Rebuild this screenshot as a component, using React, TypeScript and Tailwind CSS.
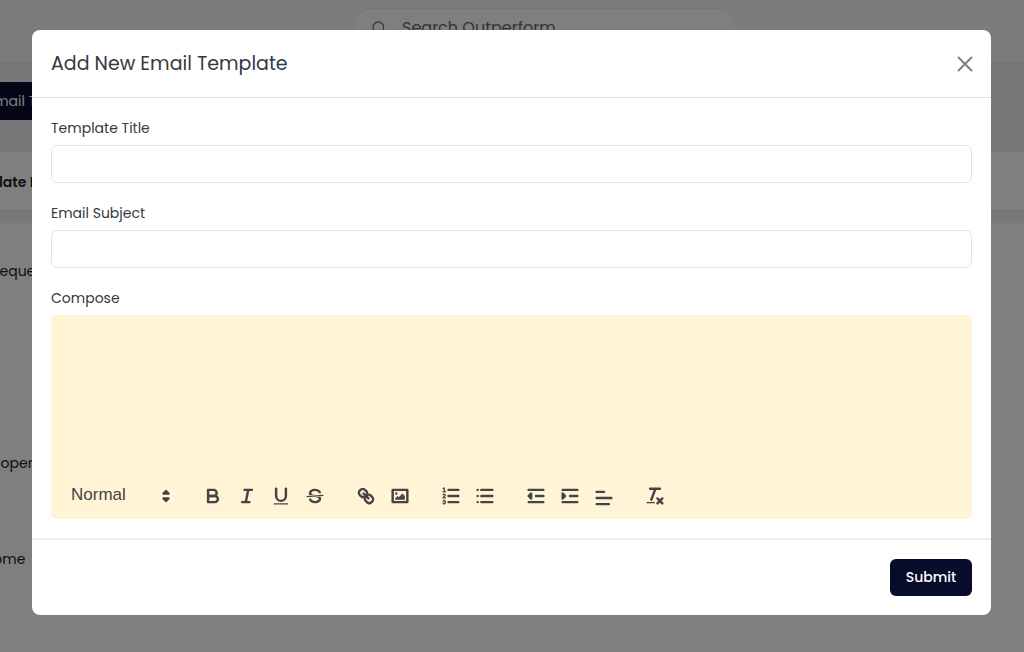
import { ReactNode } from "react"
import { Search } from "lucide-react"

const Icon = ({ children } : {children: ReactNode}) => {
    return (
        <svg viewBox="0 0 18 18" className="size-[22px]" fill="none" stroke="#444" strokeWidth="2" strokeLinecap="round" strokeLinejoin="round" aria-hidden="true">
            {children}
        </svg>
    )
}

const fill = { fill: "#444", stroke: "none" }

const toolGroups: { label: string, low?: boolean, icon: ReactNode }[][] = [
    [
        {
            label: "Bold",
            icon: <>
                <path d="M5,4H9.5A2.5,2.5,0,0,1,12,6.5v0A2.5,2.5,0,0,1,9.5,9H5V4Z" />
                <path d="M5,9h5.5A2.5,2.5,0,0,1,13,11.5v0A2.5,2.5,0,0,1,10.5,14H5V9Z" />
            </>
        },
        {
            label: "Italic",
            icon: <path d="M7,4H13M5,14H11M8,14L10,4" />
        },
        {
            label: "Underline",
            icon: <>
                <path d="M5,3V9a4.012,4.012,0,0,0,4,4H9a4.012,4.012,0,0,0,4-4V3" />
                <rect {...fill} x="3" y="15" width="12" height="1" rx="0.5" />
            </>
        },
        {
            label: "Strikethrough",
            icon: <>
                <path strokeWidth="1" d="M15.5,8.5L2.5,9.5" />
                <path {...fill} d="M9.007,8C6.542,7.791,6,7.519,6,6.5,6,5.792,7.283,5,9,5c1.571,0,2.765.679,2.969,1.309a1,1,0,0,0,1.9-.617C13.356,4.106,11.354,3,9,3,6.2,3,4,4.538,4,6.5a3.2,3.2,0,0,0,.5,1.843Z" />
                <path {...fill} d="M8.984,10C11.457,10.208,12,10.479,12,11.5c0,.708-1.283,1.5-3,1.5-1.571,0-2.765-.679-2.969-1.309a1,1,0,1,0-1.9.617C4.644,13.894,6.646,15,9,15c2.8,0,5-1.538,5-3.5a3.2,3.2,0,0,0-.5-1.843Z" />
            </>
        },
    ],
    [
        {
            label: "Link",
            icon: <>
                <path d="M7,7L11,11" />
                <path d="M8.9,4.577a3.476,3.476,0,0,1,.36,4.679A3.476,3.476,0,0,1,4.577,8.9C3.185,7.5,2.035,6.4,4.217,4.217S7.5,3.185,8.9,4.577Z" />
                <path d="M13.423,9.1a3.476,3.476,0,0,0-4.679-.36,3.476,3.476,0,0,0,.36,4.679c1.392,1.392,2.5,2.542,4.679.36S14.815,10.5,13.423,9.1Z" />
            </>
        },
        {
            label: "Image",
            icon: <>
                <rect x="3" y="4" width="12" height="10" />
                <circle {...fill} cx="6" cy="7" r="1" />
                <path {...fill} d="M5,12V11L7,9L8,10L11,7L13,9V12Z" />
            </>
        },
    ],
    [
        {
            label: "Numbered list",
            icon: <>
                <path d="M7,4H15M7,9H15M7,14H15" />
                <path strokeWidth="1" d="M2.5,5.5H4.5" />
                <path {...fill} d="M3.5,6A0.5,0.5,0,0,1,3,5.5V3.085l-0.276.138A0.5,0.5,0,0,1,2.053,3c-0.124-.247-0.023-0.324.224-0.447l1-.5A0.5,0.5,0,0,1,4,2.5v3A0.5,0.5,0,0,1,3.5,6Z" />
                <path strokeWidth="1" d="M4.5,10.5h-2c0-.234,1.85-1.076,1.85-2.234A0.959,0.959,0,0,0,2.5,8.156" />
                <path strokeWidth="1" d="M2.5,14.846a0.959,0.959,0,0,0,1.85-.109A0.7,0.7,0,0,0,3.75,14a0.688,0.688,0,0,0,.6-0.736,0.959,0.959,0,0,0-1.85-.109" />
            </>
        },
        {
            label: "Bulleted list",
            icon: <path d="M6,4H15M6,9H15M6,14H15M3,4H3M3,9H3M3,14H3" />
        },
    ],
    [
        {
            label: "Decrease indent",
            icon: <>
                <path d="M3,14H15M3,4H15M9,9H15" />
                <path fill="#444" d="M5,7V11L3,9Z" />
            </>
        },
        {
            label: "Increase indent",
            icon: <>
                <path d="M3,14H15M3,4H15M9,9H15" />
                <path fill="#444" d="M3,7V11L5,9Z" />
            </>
        },
        {
            label: "Align",
            low: true,
            icon: <path d="M3,9H15M3,14H13M3,4H9" />
        },
    ],
    [
        {
            label: "Clear formatting",
            icon: <>
                <path d="M5,3H13M6,12L9.35,3M11,11L15,15M15,11L11,15" />
                <rect {...fill} x="2" y="14" width="7" height="1" rx="0.5" />
            </>
        },
    ],
]

const Page = () => {
    return (
        <div className="min-h-screen overflow-hidden bg-[#fefefe] text-sm leading-6 text-[#222] whitespace-nowrap">
            <header className="flex h-16 justify-center border-b-2 border-[#e8e8e8] bg-[#f8f8f8] px-8 pt-2">
                <label className="ml-[66px] flex h-10 w-96 items-center gap-[15px] rounded-full border border-[#ececec] bg-[#fefefe] px-[17px]">
                    <Search size={16} strokeWidth={2} className="text-[#777]" />
                    <input type="search" aria-label="Search" placeholder="Search Outperform" className="min-w-0 flex-1 text-base outline-none placeholder:text-[#666]" />
                </label>
            </header>
            <div className="h-[88px] bg-[#efefef] pt-[18px]">
                <button className="-ml-[13px] flex h-[38px] items-center bg-[#080c2b] pr-4 text-white">Email Template</button>
            </div>
            <div className="h-[60px] border-b-2 border-[#efefef] pt-[18px]">
                <div className="-ml-[42px] font-semibold">Template Name</div>
            </div>
            <div className="h-[11px] bg-[#f3f3f3]" />
            <div className="-ml-[9px] pt-9">Request</div>
            <div className="-ml-[38px] pt-[168px]">Developer</div>
            <div className="-ml-[41px] pt-[72px]">Welcome</div>
        </div>
    )
}

const Field = ({ id, label } : {id: string, label: string}) => {
    return (
        <div className="flex flex-col gap-1.5">
            <label htmlFor={id} className="leading-[22px]">{label}</label>
            <input id={id} type="text" className="h-[38px] rounded-md border border-[#e3e4e8] px-3 outline-none" />
        </div>
    )
}

const Editor = () => {
    return (
        <div className="flex flex-col gap-1.5">
            <label htmlFor="compose" className="leading-[22px]">Compose</label>
            <div className="rounded-[5px] bg-[#fff5d6] pb-[9px]">
                <textarea id="compose" className="block h-[167px] w-full resize-none px-5 py-4 outline-none" />
                <div className="flex items-center gap-[17px] pl-5">
                    <div className="relative h-7 w-[108px]">
                        <select aria-label="Text style" className="h-[26px] w-full appearance-none font-['Liberation_Sans',sans-serif] text-[17px] text-[#444] outline-none">
                            <option>Normal</option>
                            <option>Heading 1</option>
                            <option>Heading 2</option>
                        </select>
                        <span className="pointer-events-none absolute top-[3px] right-0.5">
                            <Icon>
                                <path fill="#444" d="M7,11L9,13L11,11Z" />
                                <path fill="#444" d="M7,7L9,5L11,7Z" />
                            </Icon>
                        </span>
                    </div>
                    {toolGroups.map((group, i) => (
                        <div key={i} className="flex">
                            {group.map(tool => (
                                <button key={tool.label} type="button" aria-label={tool.label} className={tool.low ? "flex h-7 w-[34px] items-center justify-center pt-1" : "flex h-7 w-[34px] items-center justify-center"}>
                                    <Icon>{tool.icon}</Icon>
                                </button>
                            ))}
                        </div>
                    ))}
                </div>
            </div>
        </div>
    )
}

export default function App() {
    return (
        <div className="font-[Poppins,Inter,sans-serif]">
            <Page />
            <div className="fixed inset-0 overflow-auto bg-black/50 py-[30px] pr-[33px] pl-8">
                <form role="dialog" aria-labelledby="dialog-title" className="rounded-lg bg-white text-sm text-[#343a40]">
                    <div className="flex h-[68px] items-center justify-between border-b border-[#dee0e3] pr-[18px] pl-[19px]">
                        <h2 id="dialog-title" className="text-[19px]">Add New Email Template</h2>
                        <button type="button" aria-label="Close">
                            <svg viewBox="0 0 16 16" className="size-4" stroke="#7f7f7f" strokeWidth="2" strokeLinecap="round">
                                <path d="M1.5,1.5L14.5,14.5M14.5,1.5L1.5,14.5" />
                            </svg>
                        </button>
                    </div>
                    <div className="flex flex-col gap-[19px] p-[19px]">
                        <Field id="title" label="Template Title" />
                        <Field id="subject" label="Email Subject" />
                        <Editor />
                    </div>
                    <div className="flex justify-end border-t-2 border-[#eeeeef] p-[19px]">
                        <button type="button" className="h-[37px] w-[82px] rounded-md bg-[#080c2b] pb-0.5 font-medium text-white">Submit</button>
                    </div>
                </form>
            </div>
        </div>
    )
}
